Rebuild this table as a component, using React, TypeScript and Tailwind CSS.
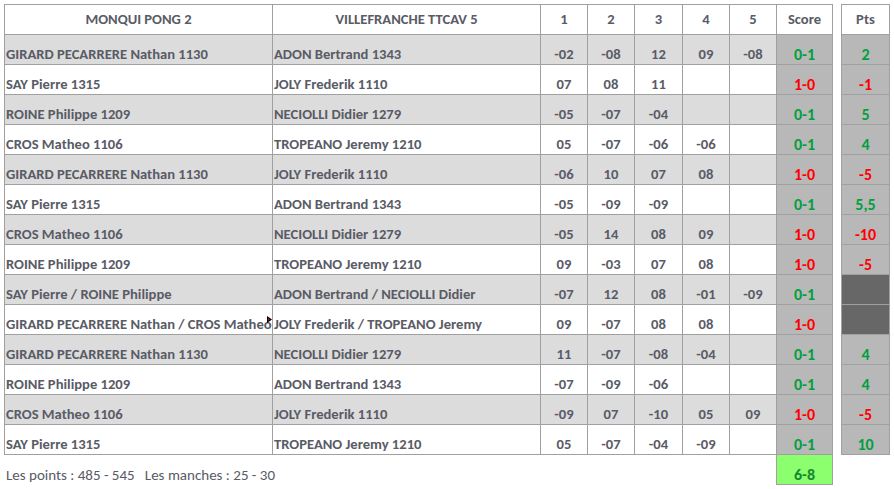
import React from 'react';

type Match = {
    home: string;
    away: string;
    sets: string[];
    score: string;
    pts: string | null;
    note?: boolean;
};

const matches: Match[] = [
    { home: 'GIRARD PECARRERE Nathan 1130', away: 'ADON Bertrand 1343', sets: ['-02', '-08', '12', '09', '-08'], score: '0-1', pts: '2' },
    { home: 'SAY Pierre 1315', away: 'JOLY Frederik 1110', sets: ['07', '08', '11', '', ''], score: '1-0', pts: '-1' },
    { home: 'ROINE Philippe 1209', away: 'NECIOLLI Didier 1279', sets: ['-05', '-07', '-04', '', ''], score: '0-1', pts: '5' },
    { home: 'CROS Matheo 1106', away: 'TROPEANO Jeremy 1210', sets: ['05', '-07', '-06', '-06', ''], score: '0-1', pts: '4' },
    { home: 'GIRARD PECARRERE Nathan 1130', away: 'JOLY Frederik 1110', sets: ['-06', '10', '07', '08', ''], score: '1-0', pts: '-5' },
    { home: 'SAY Pierre 1315', away: 'ADON Bertrand 1343', sets: ['-05', '-09', '-09', '', ''], score: '0-1', pts: '5,5' },
    { home: 'CROS Matheo 1106', away: 'NECIOLLI Didier 1279', sets: ['-05', '14', '08', '09', ''], score: '1-0', pts: '-10' },
    { home: 'ROINE Philippe 1209', away: 'TROPEANO Jeremy 1210', sets: ['09', '-03', '07', '08', ''], score: '1-0', pts: '-5' },
    { home: 'SAY Pierre / ROINE Philippe', away: 'ADON Bertrand / NECIOLLI Didier', sets: ['-07', '12', '08', '-01', '-09'], score: '0-1', pts: null },
    { home: 'GIRARD PECARRERE Nathan / CROS Matheo', away: 'JOLY Frederik / TROPEANO Jeremy', sets: ['09', '-07', '08', '08', ''], score: '1-0', pts: null, note: true },
    { home: 'GIRARD PECARRERE Nathan 1130', away: 'NECIOLLI Didier 1279', sets: ['11', '-07', '-08', '-04', ''], score: '0-1', pts: '4' },
    { home: 'ROINE Philippe 1209', away: 'ADON Bertrand 1343', sets: ['-07', '-09', '-06', '', ''], score: '0-1', pts: '4' },
    { home: 'CROS Matheo 1106', away: 'JOLY Frederik 1110', sets: ['-09', '07', '-10', '05', '09'], score: '1-0', pts: '-5' },
    { home: 'SAY Pierre 1315', away: 'TROPEANO Jeremy 1210', sets: ['05', '-07', '-04', '-09', ''], score: '0-1', pts: '10' },
];

const setWidths = ['w-[47px]', 'w-[47px]', 'w-[48px]', 'w-[47px]', 'w-[47px]'];

function tone(v: string) {
    return v.startsWith('-') || v === '1-0' ? 'text-[#ff0000]' : 'text-[#00a03c]';
}

export default function App() {
    return (
        <div
            className="w-[894px] h-[489px] bg-white pl-[4px] pt-[4px] text-[14.6px] text-[#595b66] font-bold leading-[17px]"
            style={{ fontFamily: 'Calibri, Carlito, Lato, "Open Sans", sans-serif' }}
        >
            {/* header */}
            <div className="flex h-[31px]">
                <div className="flex h-full border border-[#a0a0a0]">
                    <div className="w-[268px] border-r border-[#a0a0a0] flex items-center justify-center">MONQUI PONG 2</div>
                    <div className="w-[268px] border-r border-[#a0a0a0] flex items-center justify-center">VILLEFRANCHE TTCAV 5</div>
                    {setWidths.map((w, i) => (
                        <div key={i} className={`${w} border-r border-[#a0a0a0] flex items-center justify-center`}>{i + 1}</div>
                    ))}
                    <div className="w-[55px] flex items-center justify-center font-semibold">Score</div>
                </div>
                <div className="ml-[8px] w-[49px] h-full border border-[#a0a0a0] flex items-center justify-center font-semibold">Pts</div>
            </div>

            {/* rows */}
            {matches.map((m, idx) => {
                const bg = idx % 2 === 0 ? 'bg-[#dcdcdc]' : 'bg-white';
                return (
                    <div key={idx} className="flex h-[30px]">
                        <div className={`flex h-full border-x border-b border-[#a0a0a0] ${bg}`}>
                            <div className="relative w-[268px] border-r border-[#a0a0a0] flex items-end pl-[1px] pb-[1px] whitespace-nowrap overflow-hidden">
                                {m.home}
                                {m.note && (
                                    <svg className="absolute right-[0px] top-[11px]" width="5" height="7" viewBox="0 0 5 7">
                                        <path d="M0 0 L5 3.5 L0 7 Z" fill="#000" />
                                        <path d="M1 2 L3 3.5 L1 5 Z" fill="#e00000" />
                                    </svg>
                                )}
                            </div>
                            <div className="w-[268px] border-r border-[#a0a0a0] flex items-end pl-[1px] pb-[1px] whitespace-nowrap overflow-hidden">{m.away}</div>
                            {m.sets.map((s, i) => (
                                <div key={i} className={`${setWidths[i]} border-r border-[#a0a0a0] flex items-end justify-center pb-[1px] font-semibold`}>{s}</div>
                            ))}
                            <div className={`w-[55px] bg-[#b8b8b8] flex items-end justify-center pb-[1px] text-[16px] ${tone(m.score)}`}>{m.score}</div>
                        </div>
                        <div className={`ml-[8px] w-[49px] h-full border-x border-b border-[#a0a0a0] flex items-end justify-center pb-[1px] text-[16px] ${m.pts === null ? 'bg-[#676767]' : `bg-[#b8b8b8] ${tone(m.pts)}`}`}>
                            {m.pts}
                        </div>
                    </div>
                );
            })}

            {/* totals */}
            <div className="flex h-[30px]">
                <div className="w-[772px] flex items-end pl-[2px] pb-[1px] text-[15px] font-medium whitespace-pre">
                    {'Les points : 485 - 545   Les manches : 25 - 30'}
                </div>
                <div className="w-[57px] border-x border-b border-[#a0a0a0] bg-[#8cff6e] flex items-end justify-center pb-[1px] text-[16px] text-[#138a2c]">6-8</div>
            </div>
        </div>
    );
}
